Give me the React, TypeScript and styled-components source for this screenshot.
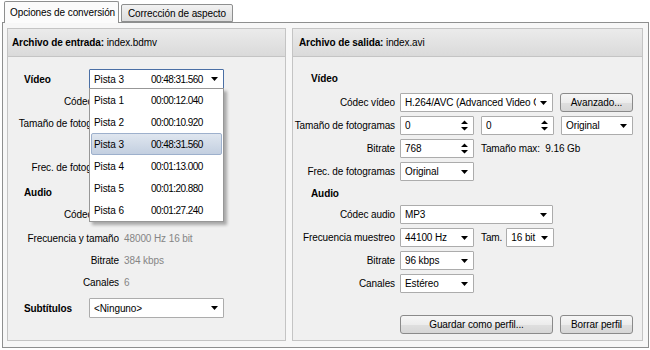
import React from 'react';
import styled, { createGlobalStyle } from 'styled-components';

const GlobalStyle = createGlobalStyle`
  html, body {
    margin: 0;
    padding: 0;
    background: #ffffff;
  }
  body {
    font-family: "Liberation Sans", Arial, sans-serif;
    font-size: 10px;
    letter-spacing: -0.1px;
    color: #000;
  }
`;

const Window = styled.div`
  width: 650px;
  height: 350px;
  box-sizing: border-box;
  padding: 0 1px 0 2px;
  overflow: hidden;
`;

const TabBar = styled.div`
  display: flex;
  align-items: flex-end;
  height: 22px;
  padding-left: 2px;
  position: relative;
  z-index: 1;
`;

const Tab = styled.div<{ $active?: boolean; $w: number }>`
  box-sizing: border-box;
  width: ${p => p.$w}px;
  height: ${p => (p.$active ? 22 : 18)}px;
  margin-bottom: ${p => (p.$active ? -1 : 0)}px;
  margin-left: ${p => (p.$active ? 0 : 2)}px;
  border: 1px solid #8e8f8f;
  border-bottom: ${p => (p.$active ? 'none' : '1px solid #8e8f8f')};
  border-radius: 2px 2px 0 0;
  background: ${p => (p.$active ? '#fbfbfb' : 'linear-gradient(#f2f2f2, #dcdcdc)')};
  display: flex;
  align-items: center;
  padding-left: ${p => (p.$active ? 5 : 6)}px;
  white-space: nowrap;
`;

const Pane = styled.div`
  box-sizing: border-box;
  height: 326px;
  border: 1px solid #8e8f8f;
  background: #f7f7f7;
  padding: 5px 5px 6px 4px;
  display: flex;
  gap: 6px;
`;

const Panel = styled.div<{ $w: number }>`
  box-sizing: border-box;
  width: ${p => p.$w}px;
  border: 1px solid #c4c4c4;
  background: #f0f0f0;
  display: flex;
  flex-direction: column;
`;

const PanelHeader = styled.div<{ $pad: number }>`
  height: 27px;
  border-bottom: 1px solid #c4c4c4;
  background: linear-gradient(#ebebeb, #dadada);
  display: flex;
  align-items: center;
  padding-left: ${p => p.$pad}px;
  white-space: pre;
`;

const Strong = styled.span`
  font-weight: bold;
`;

const PanelBody = styled.div<{ $top: number }>`
  padding-top: ${p => p.$top}px;
  display: flex;
  flex-direction: column;
`;

const SectionRow = styled.div<{ $h: number; $indent: number; $mt?: number }>`
  height: ${p => p.$h}px;
  margin-top: ${p => p.$mt ?? 0}px;
  padding-left: ${p => p.$indent}px;
  display: flex;
  align-items: center;
`;

const SectionTitle = styled.div<{ $w?: number }>`
  font-weight: bold;
  width: ${p => (p.$w ? `${p.$w}px` : 'auto')};
`;

const InfoRow = styled.div<{ $mt?: number }>`
  height: 22px;
  margin-top: ${p => p.$mt ?? 0}px;
  display: grid;
  grid-template-columns: 111px auto;
  column-gap: 5px;
  align-items: center;
  white-space: nowrap;
`;

const InfoLabel = styled.div`
  text-align: right;
`;

const InfoValue = styled.div`
  color: #858585;
`;

const FormGrid = styled.div<{ $mt: number }>`
  margin-top: ${p => p.$mt}px;
  display: flex;
  flex-direction: column;
  gap: 4px;
`;

const FormRow = styled.div`
  height: 19px;
  display: grid;
  grid-template-columns: 102px auto;
  column-gap: 5px;
  align-items: center;
  white-space: nowrap;
`;

const FormLabel = styled.div`
  text-align: right;
`;

const Controls = styled.div<{ $gap?: number }>`
  display: flex;
  align-items: center;
  gap: ${p => p.$gap ?? 7}px;
`;

const InlineText = styled.span`
  white-space: pre;
`;

const SelectWrap = styled.div`
  position: relative;
`;

const SelectBox = styled.div<{ $w: number; $h?: number; $open?: boolean }>`
  box-sizing: border-box;
  width: ${p => p.$w}px;
  height: ${p => p.$h ?? 19}px;
  border: 1px solid ${p => (p.$open ? '#4a6fa5' : '#acacac')};
  border-radius: 1px;
  background: #fff;
  display: flex;
  align-items: center;
  padding: 0 5px 0 4px;
  gap: 4px;
`;

const SelectText = styled.div`
  flex: 1;
  overflow: hidden;
  white-space: nowrap;
  display: flex;
`;

const TrackName = styled.span`
  width: 57px;
  flex: none;
`;

const TrackTime = styled.span`
  letter-spacing: -0.55px;
`;

const DropList = styled.div`
  position: absolute;
  top: 19px;
  left: 0;
  width: 135px;
  box-sizing: border-box;
  border: 1px solid #979797;
  background: #fff;
  box-shadow: 3px 3px 3px rgba(0, 0, 0, 0.3);
  z-index: 5;
`;

const DropItem = styled.div<{ $selected?: boolean }>`
  box-sizing: border-box;
  height: 22px;
  display: flex;
  align-items: center;
  padding-left: ${p => (p.$selected ? 2 : 4)}px;
  margin: 0 ${p => (p.$selected ? 1 : 0)}px;
  border: ${p => (p.$selected ? '1px solid #9db0cc' : 'none')};
  border-radius: 2px;
  background: ${p => (p.$selected ? 'linear-gradient(#dfe6ef, #c3cfe0)' : 'transparent')};
  white-space: nowrap;
`;

const Button = styled.button<{ $w: number }>`
  box-sizing: border-box;
  width: ${p => p.$w}px;
  height: 19px;
  padding: 0;
  border: 1px solid #8a8a8a;
  border-radius: 3px;
  background: linear-gradient(#f6f6f6 0%, #ececec 50%, #dfdfdf 51%, #d6d6d6 100%);
  font-family: inherit;
  font-size: 10px;
  letter-spacing: -0.1px;
  color: #000;
`;

const ButtonRow = styled.div`
  margin-top: 22px;
  padding-left: 107px;
  display: flex;
  gap: 7px;
`;

const DownArrow = () => (
  <svg width="7" height="4" viewBox="0 0 7 4">
    <path d="M0 0h7L3.5 4z" fill="#000" />
  </svg>
);

const SpinArrows = () => (
  <svg width="7" height="11" viewBox="0 0 7 11">
    <path d="M0 4h7L3.5 0.5z M0 7h7L3.5 10.5z" fill="#000" />
  </svg>
);

const Combo: React.FC<{ w: number; h?: number; children: React.ReactNode }> = ({ w, h, children }) => (
  <SelectBox $w={w} $h={h}>
    <SelectText>{children}</SelectText>
    <DownArrow />
  </SelectBox>
);

const Spin: React.FC<{ w: number; value: string }> = ({ w, value }) => (
  <SelectBox $w={w}>
    <SelectText>{value}</SelectText>
    <SpinArrows />
  </SelectBox>
);

const tracks = [
  ['Pista 1', '00:00:12.040'],
  ['Pista 2', '00:00:10.920'],
  ['Pista 3', '00:48:31.560'],
  ['Pista 4', '00:01:13.000'],
  ['Pista 5', '00:01:20.880'],
  ['Pista 6', '00:01:27.240'],
];

const App: React.FC = () => {
  const selected = 2;

  return (
    <Window>
      <GlobalStyle />
      <TabBar>
        <Tab $active $w={115}>Opciones de conversión</Tab>
        <Tab $w={112}>Corrección de aspecto</Tab>
      </TabBar>
      <Pane>
        <Panel $w={279}>
          <PanelHeader $pad={4}>
            <Strong>Archivo de entrada:</Strong> index.bdmv
          </PanelHeader>
          <PanelBody $top={12}>
            <SectionRow $h={20} $indent={16}>
              <SectionTitle $w={65}>Vídeo</SectionTitle>
              <SelectWrap>
                <SelectBox $w={135} $h={20} $open>
                  <SelectText>
                    <TrackName>{tracks[selected][0]}</TrackName>
                    <TrackTime>{tracks[selected][1]}</TrackTime>
                  </SelectText>
                  <DownArrow />
                </SelectBox>
                <DropList>
                  {tracks.map((t, i) => (
                    <DropItem key={t[0]} $selected={i === selected}>
                      <TrackName>{t[0]}</TrackName>
                      <TrackTime>{t[1]}</TrackTime>
                    </DropItem>
                  ))}
                </DropList>
              </SelectWrap>
            </SectionRow>
            <InfoRow $mt={1}>
              <InfoLabel>Códec vídeo</InfoLabel>
            </InfoRow>
            <InfoRow>
              <InfoLabel>Tamaño de fotogramas</InfoLabel>
            </InfoRow>
            <InfoRow />
            <InfoRow>
              <InfoLabel>Frec. de fotogramas</InfoLabel>
            </InfoRow>
            <SectionRow $h={22} $indent={16} $mt={3}>
              <SectionTitle>Audio</SectionTitle>
            </SectionRow>
            <InfoRow>
              <InfoLabel>Códec audio</InfoLabel>
            </InfoRow>
            <InfoRow $mt={2}>
              <InfoLabel>Frecuencia y tamaño</InfoLabel>
              <InfoValue>48000 Hz 16 bit</InfoValue>
            </InfoRow>
            <InfoRow>
              <InfoLabel>Bitrate</InfoLabel>
              <InfoValue>384 kbps</InfoValue>
            </InfoRow>
            <InfoRow>
              <InfoLabel>Canales</InfoLabel>
              <InfoValue>6</InfoValue>
            </InfoRow>
            <SectionRow $h={20} $indent={16} $mt={5}>
              <SectionTitle $w={65}>Subtítulos</SectionTitle>
              <Combo w={135} h={20}>&lt;Ninguno&gt;</Combo>
            </SectionRow>
          </PanelBody>
        </Panel>

        <Panel $w={351}>
          <PanelHeader $pad={6}>
            <Strong>Archivo de salida:</Strong> index.avi
          </PanelHeader>
          <PanelBody $top={10}>
            <SectionRow $h={22} $indent={18}>
              <SectionTitle>Vídeo</SectionTitle>
            </SectionRow>
            <FormGrid $mt={4}>
              <FormRow>
                <FormLabel>Códec vídeo</FormLabel>
                <Controls>
                  <Combo w={153}>H.264/AVC (Advanced Video Coding)</Combo>
                  <Button $w={73}>Avanzado...</Button>
                </Controls>
              </FormRow>
              <FormRow>
                <FormLabel>Tamaño de fotogramas</FormLabel>
                <Controls>
                  <Spin w={74} value="0" />
                  <Spin w={73} value="0" />
                  <Combo w={72}>Original</Combo>
                </Controls>
              </FormRow>
              <FormRow>
                <FormLabel>Bitrate</FormLabel>
                <Controls>
                  <Spin w={74} value="768" />
                  <InlineText>Tamaño max:  9.16 Gb</InlineText>
                </Controls>
              </FormRow>
              <FormRow>
                <FormLabel>Frec. de fotogramas</FormLabel>
                <Controls>
                  <Combo w={74}>Original</Combo>
                </Controls>
              </FormRow>
            </FormGrid>
            <SectionRow $h={22} $indent={18} $mt={1}>
              <SectionTitle>Audio</SectionTitle>
            </SectionRow>
            <FormGrid $mt={1}>
              <FormRow>
                <FormLabel>Códec audio</FormLabel>
                <Controls>
                  <Combo w={153}>MP3</Combo>
                </Controls>
              </FormRow>
              <FormRow>
                <FormLabel>Frecuencia muestreo</FormLabel>
                <Controls>
                  <Combo w={74}>44100 Hz</Combo>
                  <Controls $gap={4}>
                    <InlineText>Tam.</InlineText>
                    <Combo w={48}>16 bit</Combo>
                  </Controls>
                </Controls>
              </FormRow>
              <FormRow>
                <FormLabel>Bitrate</FormLabel>
                <Controls>
                  <Combo w={74}>96 kbps</Combo>
                </Controls>
              </FormRow>
              <FormRow>
                <FormLabel>Canales</FormLabel>
                <Controls>
                  <Combo w={74}>Estéreo</Combo>
                </Controls>
              </FormRow>
            </FormGrid>
            <ButtonRow>
              <Button $w={153}>Guardar como perfil...</Button>
              <Button $w={73}>Borrar perfil</Button>
            </ButtonRow>
          </PanelBody>
        </Panel>
      </Pane>
    </Window>
  );
};

export default App;
